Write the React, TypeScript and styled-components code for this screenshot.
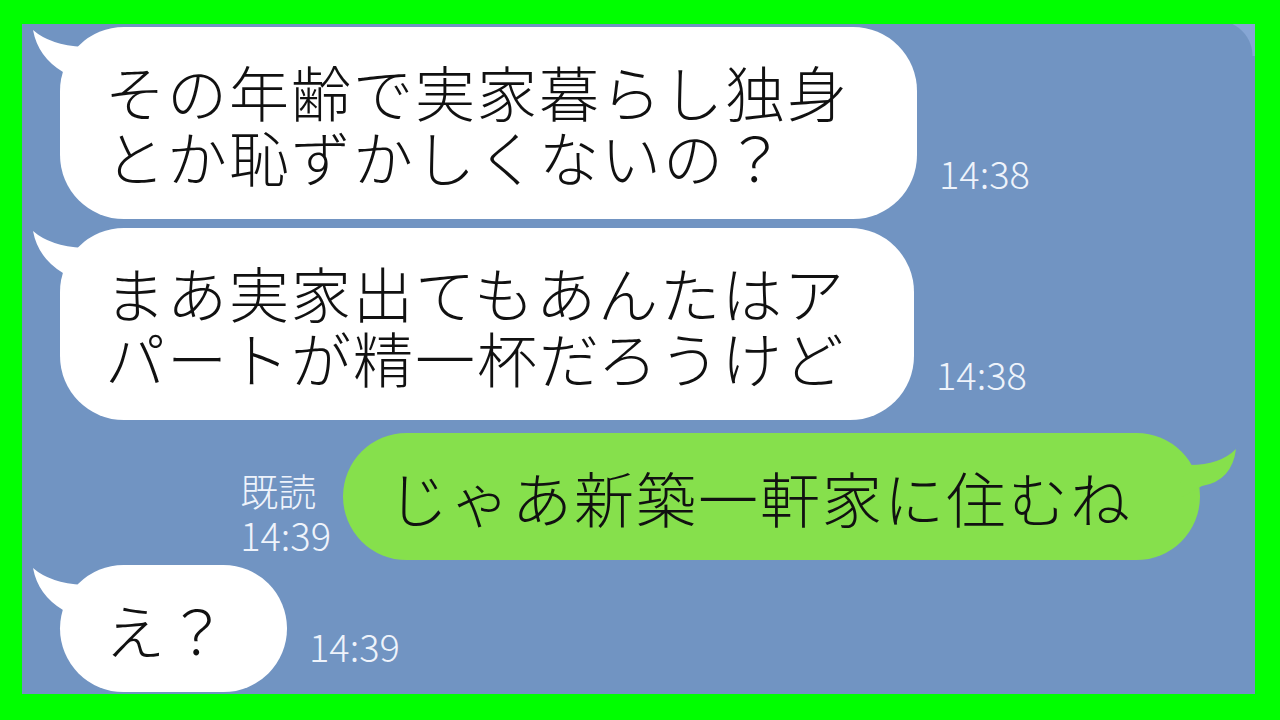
import React from "react";
import styled, { createGlobalStyle } from "styled-components";

const GlobalStyle = createGlobalStyle`
  html, body {
    margin: 0;
    padding: 0;
    background: #00ff00;
  }
  * { box-sizing: border-box; }
`;

const Frame = styled.div`
  width: 1280px;
  height: 720px;
  background: #00ff00;
  padding: 24px 25px 26px 22px;
`;

const ChatPanel = styled.div`
  position: relative;
  height: 100%;
  background: #7194c2;
  overflow: hidden;
  display: flex;
  flex-direction: column;
  padding: 3px 55px 0 38px;
  font-family: "Noto Sans CJK JP", "Noto Sans", sans-serif;
`;

const CornerCurl = styled.div`
  position: absolute;
  top: 0;
  right: 0;
  width: 38px;
  height: 32px;
  background: radial-gradient(circle at 0 100%, transparent 35px, #86a6d4 36px);
`;

const Row = styled.div<{ $gap: number; $align?: "start" | "end" }>`
  display: flex;
  align-items: flex-end;
  justify-content: ${(p) => (p.$align === "end" ? "flex-end" : "flex-start")};
  margin-top: ${(p) => p.$gap}px;
  flex-shrink: 0;
`;

const Bubble = styled.div<{ $mine?: boolean; $padRight?: number }>`
  position: relative;
  background: ${(p) => (p.$mine ? "#86e04c" : "#ffffff")};
  border-radius: 64px;
  padding: 31px ${(p) => p.$padRight ?? 68}px 31px 45px;
  font-size: 60px;
  line-height: 65px;
  letter-spacing: 2px;
  font-weight: 300;
  color: #111;
  white-space: nowrap;
`;

const TailLeft = styled.svg`
  position: absolute;
  left: -30px;
  top: 0;
  width: 64px;
  height: 62px;
  overflow: visible;
`;

const TailRight = styled.svg`
  position: absolute;
  right: -40px;
  top: 10px;
  width: 60px;
  height: 60px;
  overflow: visible;
`;

const Time = styled.div`
  color: #eef3fb;
  font-size: 38px;
  line-height: 1;
  font-weight: 300;
  margin: 0 0 27px 22px;
  white-space: nowrap;
`;

const ReadLabel = styled.div`
  color: #eef3fb;
  font-size: 38px;
  line-height: 45px;
  font-weight: 300;
  margin: 0 12px 3px 0;
  white-space: nowrap;
`;

const WhiteTail = () => (
  <TailLeft viewBox="0 0 64 62">
    <path d="M3,3 Q20,18 53,20 L62,40 L62,60 L33,45 Q8,30 3,3 Z" fill="#ffffff" />
  </TailLeft>
);

const GreenTail = () => (
  <TailRight viewBox="0 0 60 60">
    <path d="M56,6 Q40,22 10,22 L0,40 L0,55 L22,43 Q52,38 56,6 Z" fill="#86e04c" />
  </TailRight>
);

export default function App() {
  return (
    <>
      <GlobalStyle />
      <Frame>
        <ChatPanel>
          <CornerCurl />
          <Row $gap={0}>
            <Bubble>
              <WhiteTail />
              その年齢で実家暮らし独身
              <br />
              とか恥ずかしくないの？
            </Bubble>
            <Time>14:38</Time>
          </Row>
          <Row $gap={9}>
            <Bubble>
              <WhiteTail />
              まあ実家出てもあんたはア
              <br />
              パートが精一杯だろうけど
            </Bubble>
            <Time>14:38</Time>
          </Row>
          <Row $gap={13} $align="end">
            <ReadLabel>
              既読
              <br />
              14:39
            </ReadLabel>
            <Bubble $mine>
              <GreenTail />
              じゃあ新築一軒家に住むね
            </Bubble>
          </Row>
          <Row $gap={5}>
            <Bubble $padRight={58}>
              <WhiteTail />
              え？
            </Bubble>
            <Time>14:39</Time>
          </Row>
        </ChatPanel>
      </Frame>
    </>
  );
}
